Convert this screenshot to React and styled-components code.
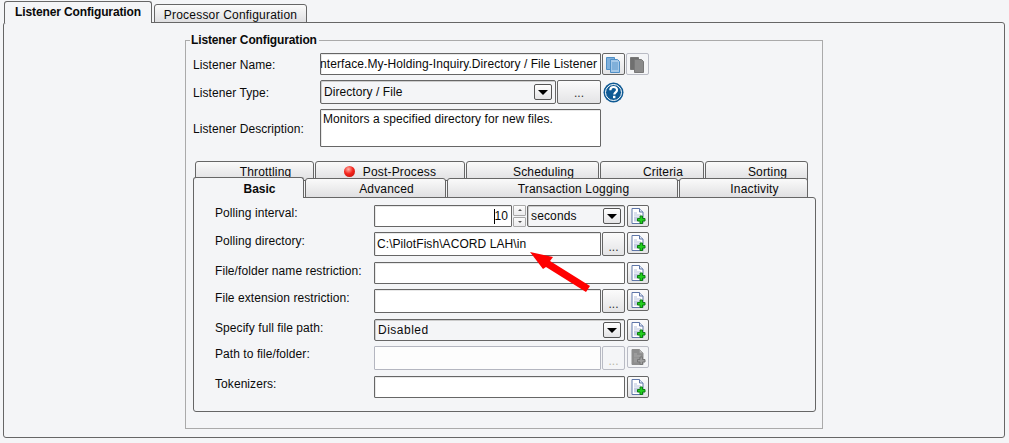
import React from 'react';
import styled, { createGlobalStyle } from 'styled-components';

const Global = createGlobalStyle`
  html, body { margin: 0; padding: 0; background: #f4f5f7; }
  body { font-family: "Liberation Sans", Arial, sans-serif; font-size: 12px; color: #0a0a0a; letter-spacing: .07px; }
`;

const Page = styled.div`
  box-sizing: border-box;
  width: 1009px;
  height: 443px;
  padding: 2px 4px 0 3px;
  overflow: hidden;
  background: #f4f5f7;
`;

const TopTabs = styled.div`
  display: flex;
  align-items: flex-end;
  gap: 2px;
  height: 21px;
  padding-left: 1px;
  position: relative;
  z-index: 1;
  margin-bottom: -1px;
`;

const TopTab = styled.div`
  box-sizing: border-box;
  width: ${p => p.$w}px;
  height: ${p => (p.$active ? 22 : 19)}px;
  border: 1px solid #666;
  border-bottom: ${p => (p.$active ? 'none' : '1px solid #666')};
  border-radius: 3px 3px 0 0;
  background: ${p => (p.$active ? '#f4f5f7' : 'linear-gradient(#fbfbfb, #dfdfe1)')};
  font-weight: ${p => (p.$active ? 700 : 400)};
  letter-spacing: ${p => (p.$active ? -0.13 : 0.2)}px;
  text-align: center;
  line-height: 20px;
`;

const Panel = styled.div`
  box-sizing: border-box;
  height: 416px;
  border: 1px solid #666;
  border-radius: 3px;
  padding: 10px 0 0 181px;
`;

const Group = styled.fieldset`
  box-sizing: border-box;
  width: 638px;
  height: 396px;
  margin: 0;
  padding: 6px 6px 0 7px;
  border: 1px solid #aaa;
`;

const Legend = styled.legend`
  padding: 0 2px 0 1px;
  margin-left: -3px;
  font-weight: 700;
  letter-spacing: -0.13px;
  line-height: 14px;
`;

const FormRow = styled.div`
  display: flex;
  align-items: flex-start;
  height: ${p => p.$h}px;
  margin-bottom: ${p => p.$gap || 0}px;
`;

const FormLabel = styled.div`
  width: 127px;
  padding-top: ${p => p.$pt}px;
  flex: none;
`;

const Field = styled.div`
  box-sizing: border-box;
  display: flex;
  align-items: ${p => (p.$top ? 'flex-start' : 'center')};
  justify-content: ${p => (p.$end ? 'flex-end' : 'flex-start')};
  flex: none;
  width: ${p => p.$w}px;
  height: ${p => p.$h || 22}px;
  padding: ${p => (p.$top ? '2px' : '0 3px 0 2px')};
  border: 1px solid ${p => (p.$disabled ? '#b4b6c0' : '#666')};
  border-radius: 1px;
  box-shadow: ${p => (p.$disabled ? 'none' : 'inset 1px 1px 0 #e8e8e8')};
  background: ${p => (p.$disabled ? '#fdfdfd' : '#fff')};
  overflow: hidden;
  white-space: nowrap;
`;

const Select = styled.div`
  box-sizing: border-box;
  display: flex;
  align-items: center;
  justify-content: space-between;
  flex: none;
  width: ${p => p.$w}px;
  height: ${p => p.$h || 22}px;
  padding: 0 3px 0 3px;
  border: 1px solid #666;
  border-radius: 2px;
  box-shadow: inset 1px 1px 0 #ccc;
  background: #f4f5f7;
  letter-spacing: ${p => p.$ls ?? 0.07}px;
`;

const Caret = styled.div`
  box-sizing: border-box;
  display: flex;
  align-items: center;
  justify-content: center;
  width: 18px;
  height: 16px;
  border: 1px solid #555;
  border-radius: 2px;
  background: linear-gradient(#fff, #e4e4e6);
  &::after {
    content: '';
    border-left: 5px solid transparent;
    border-right: 5px solid transparent;
    border-top: 5px solid #000;
  }
`;

const IconButton = styled.div`
  box-sizing: border-box;
  display: flex;
  align-items: center;
  justify-content: center;
  flex: none;
  width: ${p => p.$w || 23}px;
  height: ${p => p.$h || 22}px;
  margin-left: ${p => p.$ml ?? 1}px;
  border: 1px solid ${p => (p.$disabled ? '#b9bbc4' : '#666')};
  border-radius: 2px;
  background: ${p => (p.$disabled ? '#f4f5f7' : 'linear-gradient(#fbfbfb, #e4e4e6)')};
  color: ${p => (p.$disabled ? '#b8b8a8' : '#333')};
  font-size: 12px;
  line-height: 14px;
`;

const Dots = styled.span`
  position: relative;
  top: ${p => p.$top ?? 1}px;
`;

const HelpIcon = styled.svg`
  width: 21px;
  height: 21px;
  margin: 2px 0 0 2px;
  flex: none;
`;

const TabStack = styled.div`
  margin: 14px 0 0;
  width: 623px;
`;

const TabRow = styled.div`
  display: flex;
  align-items: flex-end;
  gap: ${p => p.$gap}px;
  height: ${p => p.$h}px;
  padding-left: ${p => p.$pl || 0}px;
  margin-top: ${p => p.$mt || 0}px;
  position: relative;
`;

const SubTab = styled.div`
  box-sizing: border-box;
  display: flex;
  align-items: center;
  justify-content: center;
  gap: 8px;
  flex: none;
  width: ${p => p.$w}px;
  height: ${p => (p.$active ? 21 : 20)}px;
  padding-left: ${p => (p.$icon ? 0 : 22)}px;
  padding-top: 1px;
  border: 1px solid #666;
  border-bottom: ${p => (p.$active ? 'none' : '1px solid #666')};
  border-radius: 3px 3px 0 0;
  background: ${p => (p.$active ? '#f4f5f7' : 'linear-gradient(#fafafa, #e0e0e2)')};
  font-weight: ${p => (p.$active ? 700 : 400)};
  letter-spacing: ${p => (p.$active ? 0 : 0.17)}px;
  position: relative;
  z-index: ${p => (p.$active ? 2 : 1)};
`;

const RedDot = styled.span`
  width: 11px;
  height: 11px;
  border-radius: 50%;
  background: radial-gradient(circle at 40% 30%, #ffb0a8 0, #f5251c 45%, #b80f0a 100%);
`;

const InnerPanel = styled.div`
  box-sizing: border-box;
  position: relative;
  height: 215px;
  margin-top: -1px;
  padding: 7px 0 0 21px;
  border: 1px solid #666;
  border-radius: 0 3px 3px 3px;
`;

const Row = styled.div`
  display: flex;
  align-items: flex-start;
  height: ${p => p.$h}px;
`;

const RowLabel = styled.div`
  width: 159px;
  flex: none;
  padding-top: ${p => p.$pt ?? 1}px;
  line-height: 14px;
`;

const Spinner = styled.div`
  box-sizing: border-box;
  display: flex;
  flex-direction: column;
  gap: 1px;
  width: 15px;
  height: 22px;
  flex: none;
  padding: 0 1px;
`;

const SpinBtn = styled.div`
  box-sizing: border-box;
  flex: 1;
  display: flex;
  align-items: center;
  justify-content: center;
  border: 1px solid #a8a8a8;
  border-radius: 1px;
  background: linear-gradient(#fbfbfb, #ececee);
  &::after {
    content: '';
    border-left: 2px solid transparent;
    border-right: 2px solid transparent;
    ${p => (p.$down ? 'border-top: 2px solid #555;' : 'border-bottom: 2px solid #555;')}
  }
`;

const TextCursor = styled.span`
  display: inline-block;
  width: 1px;
  height: 15px;
  background: #000;
`;

const Arrow = styled.svg`
  position: absolute;
  left: 331px;
  top: 50px;
  width: 70px;
  height: 48px;
`;

const AddIcon = ({ disabled }) => (
  <svg width="15" height="17" viewBox="0 0 15 17">
    <path
      d="M1 .5h7.5L12 4v11.5H1z"
      fill={disabled ? '#8d8d8d' : '#fff'}
      stroke={disabled ? '#8d8d8d' : '#5f76a8'}
    />
    <path d="M8.5.5V4H12" fill={disabled ? '#bbb' : '#dfe5f2'} stroke={disabled ? '#999' : '#5f76a8'} />
    <path d="M3 7h7M3 5h3" stroke={disabled ? '#aaa' : '#b5c0dc'} fill="none" />
    <rect x="3" y="8.5" width="5" height="5" fill={disabled ? '#999' : '#c5cde4'} />
    <path
      d="M9 8h2.500v2.500H14V13h-2.500v2.500H9V13H6.500v-2.500H9z"
      fill={disabled ? '#a0a0a0' : '#22d01e'}
      stroke={disabled ? '#777' : '#0c7d10'}
    />
  </svg>
);

const CopyIcon = ({ disabled }) => {
  const fill = disabled ? '#8a8a8a' : '#a5c8e8';
  const edge = disabled ? '#777' : '#4f8fc6';
  return (
    <svg width="15" height="17" viewBox="0 0 15 17">
      <path d="M.5 1.500h8v12h-8z" fill={disabled ? '#6f6f6f' : '#7fb0dc'} stroke={edge} />
      <path d="M4.500 3.500h7l2 2v11h-9z" fill={fill} stroke={edge} />
      {!disabled && <path d="M6 7h6M6 9h6M6 11h6M6 13h6" stroke="#5b97cb" />}
    </svg>
  );
};

const Help = () => (
  <HelpIcon viewBox="0 0 21 21">
    <circle cx="10.500" cy="10.500" r="10" fill="#0f5a94" />
    <circle cx="10.500" cy="10.500" r="8" fill="none" stroke="#fff" strokeWidth="1" />
    <path
      d="M7.300 8.200c0-4.200 6.700-4.200 6.700-.2 0 2.400-2.700 2.400-2.700 4.600"
      fill="none"
      stroke="#fff"
      strokeWidth="2.200"
    />
    <rect x="10" y="13.800" width="2.400" height="2.400" fill="#fff" />
  </HelpIcon>
);

const Add = ({ disabled }) => (
  <IconButton $disabled={disabled} $ml={2} $w={22}>
    <AddIcon disabled={disabled} />
  </IconButton>
);

const rows = [
  { label: 'Polling interval:', h: 27, pt: 1 },
  { label: 'Polling directory:', h: 30, pt: 2 },
  { label: 'File/folder name restriction:', h: 27, pt: 2 },
  { label: 'File extension restriction:', h: 30, pt: 2 },
  { label: 'Specify full file path:', h: 27, pt: 2 },
  { label: 'Path to file/folder:', h: 30, pt: 1 },
  { label: 'Tokenizers:', h: 22, pt: 1 },
];

export default function App() {
  return (
    <Page>
      <Global />
      <TopTabs>
        <TopTab $active $w={148}>Listener Configuration</TopTab>
        <TopTab $w={153}>Processor Configuration</TopTab>
      </TopTabs>
      <Panel>
        <Group>
          <Legend>Listener Configuration</Legend>
          <FormRow $h={22} $gap={5}>
            <FormLabel $pt={5}>Listener Name:</FormLabel>
            <Field $w={281} $end>Interface.My-Holding-Inquiry.Directory / File Listener</Field>
            <IconButton $w={23}><CopyIcon /></IconButton>
            <IconButton $w={23} $ml={1} $disabled><CopyIcon disabled /></IconButton>
          </FormRow>
          <FormRow $h={24} $gap={5}>
            <FormLabel $pt={6}>Listener Type:</FormLabel>
            <Select $w={236} $h={24}>Directory / File<Caret /></Select>
            <IconButton $w={44} $h={24}><Dots>...</Dots></IconButton>
            <Help />
          </FormRow>
          <FormRow $h={38}>
            <FormLabel $pt={13}>Listener Description:</FormLabel>
            <Field $w={281} $h={38} $top>Monitors a specified directory for new files.</Field>
          </FormRow>

          <TabStack>
            <TabRow $h={20} $gap={1} $pl={2}>
              <SubTab $w={119}>Throttling</SubTab>
              <SubTab $w={150} $icon><RedDot />Post-Process</SubTab>
              <SubTab $w={133}>Scheduling</SubTab>
              <SubTab $w={104}>Criteria</SubTab>
              <SubTab $w={103}>Sorting</SubTab>
            </TabRow>
            <TabRow $h={21} $gap={1} $mt={-4}>
              <SubTab $w={111} $active>Basic</SubTab>
              <SubTab $w={141}>Advanced</SubTab>
              <SubTab $w={231}>Transaction Logging</SubTab>
              <SubTab $w={129}>Inactivity</SubTab>
            </TabRow>
            <InnerPanel>
              <Row $h={rows[0].h}>
                <RowLabel $pt={rows[0].pt}>{rows[0].label}</RowLabel>
                <Field $w={138} $end><TextCursor />10</Field>
                <Spinner><SpinBtn /><SpinBtn $down /></Spinner>
                <Select $w={98} $ls={0.15}>seconds<Caret /></Select>
                <Add />
              </Row>
              <Row $h={rows[1].h}>
                <RowLabel $pt={rows[1].pt}>{rows[1].label}</RowLabel>
                <Field $w={227} $h={24}>C:\PilotFish\ACORD LAH\in</Field>
                <IconButton $h={24}><Dots $top={3}>...</Dots></IconButton>
                <Add />
              </Row>
              <Row $h={rows[2].h}>
                <RowLabel $pt={rows[2].pt}>{rows[2].label}</RowLabel>
                <Field $w={251} />
                <Add />
              </Row>
              <Row $h={rows[3].h}>
                <RowLabel $pt={rows[3].pt}>{rows[3].label}</RowLabel>
                <Field $w={227} $h={24} />
                <IconButton $h={24}><Dots $top={3}>...</Dots></IconButton>
                <Add />
              </Row>
              <Row $h={rows[4].h}>
                <RowLabel $pt={rows[4].pt}>{rows[4].label}</RowLabel>
                <Select $w={251} $ls={0.5}>Disabled<Caret /></Select>
                <Add />
              </Row>
              <Row $h={rows[5].h}>
                <RowLabel $pt={rows[5].pt}>{rows[5].label}</RowLabel>
                <Field $w={227} $h={24} $disabled />
                <IconButton $h={24} $disabled><Dots $top={3}>...</Dots></IconButton>
                <Add disabled />
              </Row>
              <Row $h={rows[6].h}>
                <RowLabel $pt={rows[6].pt}>{rows[6].label}</RowLabel>
                <Field $w={251} />
                <Add />
              </Row>
              <Arrow viewBox="0 0 70 48">
                <polygon points="5,4 28,9 25,13 65,38 61,44 21,19 18,21" fill="#f00" />
              </Arrow>
            </InnerPanel>
          </TabStack>
        </Group>
      </Panel>
    </Page>
  );
}
